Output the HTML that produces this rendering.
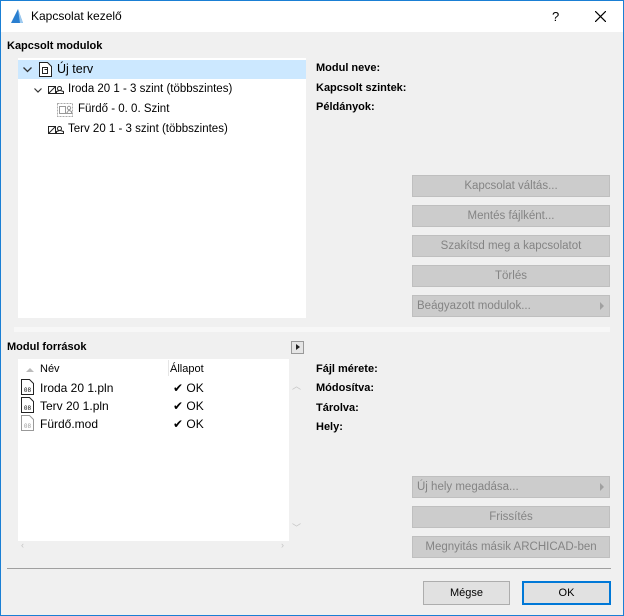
<!DOCTYPE html>
<html><head><meta charset="utf-8"><style>
*{box-sizing:border-box;margin:0;padding:0}
body{width:624px;height:616px;overflow:hidden;font-family:"Liberation Sans",sans-serif;font-size:11px;color:#000;background:#fff}
.win{position:absolute;left:0;top:0;width:624px;height:616px;border:1px solid #1a7fd4;background:#f0f0f0}
.title{position:absolute;left:0;top:0;width:622px;height:31px;background:#fff}
.title .t{position:absolute;left:30px;top:8px;font-size:12px}
.a{position:absolute;white-space:nowrap}
.b{font-weight:bold}
.box{position:absolute;background:#fff}
.btn{position:absolute;left:411px;width:198px;height:22px;background:#cccccc;border:1px solid #bfbfbf;color:#848484;text-align:center;line-height:20px;font-size:11.5px}
.btn.l{text-align:left;padding-left:4px}
.btn.l:after{content:"";position:absolute;right:5px;top:6px;border-left:4px solid #a0a0a0;border-top:4px solid transparent;border-bottom:4px solid transparent}
.pb{position:absolute;top:580px;height:24px;width:87px;background:#e1e1e1;border:1px solid #adadad;text-align:center;line-height:22px}
</style></head><body><div class="win">
<div class="title">
<svg style="position:absolute;left:9px;top:7px" width="14" height="16"><path d="M1 15 L8 1 L13 15 Z" fill="#2a7fd0"/><path d="M8 1 L13 15 L10 15 Z" fill="#9cc9ef"/></svg>
<div class="t">Kapcsolat kezelő</div>
<div class="a" style="left:551px;top:8px;font-size:13px">?</div>
<svg style="position:absolute;left:594px;top:10px" width="11" height="11"><path d="M0 0L11 11M11 0L0 11" stroke="#000" stroke-width="1.2"/></svg>
</div>
<div class="a b" style="left:6px;top:39px">Kapcsolt modulok</div>
<div class="box" style="left:17px;top:57px;width:288px;height:260px">
<div style="position:absolute;left:0;top:2px;width:288px;height:19px;background:#cce8ff"></div>
<svg style="position:absolute;left:5px;top:9px" width="9" height="6"><path d="M0.5 0.5L4.5 4.5L8.5 0.5" stroke="#333" fill="none" stroke-width="1.3"/></svg>
<svg style="position:absolute;left:21px;top:4px" width="13" height="15"><path d="M0.5 0.5H8.5L12.5 4.5V14.5H0.5Z" fill="#fff" stroke="#222"/><path d="M3.5 5.5h5v6h-5zM5.5 7.5h3" stroke="#222" fill="none"/></svg>
<div class="a" style="left:39px;top:4px;font-size:12.5px">Új terv</div>
<svg style="position:absolute;left:16px;top:30px" width="8" height="5"><path d="M0.5 0.5L4 4L7.5 0.5" stroke="#333" fill="none" stroke-width="1.2"/></svg>
<svg style="position:absolute;left:30px;top:27px" width="16" height="10"><rect x="0.5" y="1.5" width="7" height="7" fill="none" stroke="#222"/><path d="M1 8L7 2" stroke="#222"/><circle cx="11.5" cy="3.5" r="2" fill="none" stroke="#222"/><path d="M8.5 8.5h7v-2l-3-1h-1l-3 1z" fill="none" stroke="#222"/></svg>
<div class="a" style="left:50px;top:25px;font-size:11.5px">Iroda 20 1 - 3 szint (többszintes)</div>
<svg style="position:absolute;left:39px;top:45px" width="16" height="14"><rect x="0.5" y="0.5" width="15" height="13" fill="none" stroke="#aaa" stroke-dasharray="2 1"/><rect x="2.5" y="3.5" width="6" height="7" fill="none" stroke="#999"/><circle cx="12" cy="5" r="1.7" fill="none" stroke="#999"/><path d="M9.5 10.5h5v-2l-2-1h-1z" fill="none" stroke="#999"/></svg>
<div class="a" style="left:60px;top:45px;font-size:11.5px">Fürdő - 0. 0. Szint</div>
<svg style="position:absolute;left:30px;top:67px" width="16" height="10"><rect x="0.5" y="1.5" width="7" height="7" fill="none" stroke="#222"/><path d="M1 8L7 2" stroke="#222"/><circle cx="11.5" cy="3.5" r="2" fill="none" stroke="#222"/><path d="M8.5 8.5h7v-2l-3-1h-1l-3 1z" fill="none" stroke="#222"/></svg>
<div class="a" style="left:50px;top:65px;font-size:11.5px">Terv 20 1 - 3 szint (többszintes)</div>
</div>
<div class="a b" style="left:315px;top:61px">Modul neve:</div>
<div class="a b" style="left:315px;top:81px">Kapcsolt szintek:</div>
<div class="a b" style="left:315px;top:100px">Példányok:</div>
<div class="btn" style="top:174px">Kapcsolat váltás...</div>
<div class="btn" style="top:204px">Mentés fájlként...</div>
<div class="btn" style="top:234px">Szakítsd meg a kapcsolatot</div>
<div class="btn" style="top:264px">Törlés</div>
<div class="btn l" style="top:294px">Beágyazott modulok...</div>
<div style="position:absolute;left:13px;top:326px;width:596px;height:5px;background:#f7f7f7"></div>
<div class="a b" style="left:6px;top:340px">Modul források</div>
<div style="position:absolute;left:290px;top:340px;width:13px;height:13px;border:1px solid #999;background:#e5e5e5"><div style="position:absolute;left:4px;top:2px;border-left:4px solid #222;border-top:3.5px solid transparent;border-bottom:3.5px solid transparent"></div></div>
<div class="box" style="left:17px;top:358px;width:271px;height:182px">
<div style="position:absolute;left:150px;top:1px;width:1px;height:16px;background:#e5e5e5"></div>
<div style="position:absolute;left:8px;top:9px;border-bottom:4px solid #bbb;border-left:4px solid transparent;border-right:4px solid transparent"></div>
<div class="a" style="left:22px;top:4px">Név</div>
<div class="a" style="left:152px;top:4px">Állapot</div>
<div class="a" style="left:22px;top:22px;font-size:12px">Iroda 20 1.pln</div>
<div class="a" style="left:22px;top:40px;font-size:12px">Terv 20 1.pln</div>
<div class="a" style="left:22px;top:58px;font-size:12px">Fürdő.mod</div>
<svg style="position:absolute;left:3px;top:20px" width="13" height="56"><g fill="#fff" stroke="#222"><path d="M0.5 0.5H8.5L12.5 4.5V15.5H0.5Z"/><path d="M0.5 18.5H8.5L12.5 22.5V33.5H0.5Z"/></g><path d="M0.5 36.5H8.5L12.5 40.5V51.5H0.5Z" fill="#fff" stroke="#999"/><g font-size="6" font-family="Liberation Mono" text-anchor="middle"><text x="6.5" y="13">08</text><text x="6.5" y="31">08</text><text x="6.5" y="49" fill="#999">08</text></g></svg>
<div class="a" style="left:155px;top:22px;font-size:12px">✔ OK</div>
<div class="a" style="left:155px;top:40px;font-size:12px">✔ OK</div>
<div class="a" style="left:155px;top:58px;font-size:12px">✔ OK</div>
</div>
<div class="a" style="left:291px;top:378px;color:#c4c4c4;font-size:9px">︿</div>
<div class="a" style="left:291px;top:520px;color:#c4c4c4;font-size:9px">﹀</div>
<div class="a" style="left:20px;top:539px;color:#c4c4c4;font-size:9px">‹</div>
<div class="a" style="left:280px;top:539px;color:#c4c4c4;font-size:9px">›</div>
<div class="a b" style="left:315px;top:362px">Fájl mérete:</div>
<div class="a b" style="left:315px;top:381px">Módosítva:</div>
<div class="a b" style="left:315px;top:401px">Tárolva:</div>
<div class="a b" style="left:315px;top:420px">Hely:</div>
<div class="btn l" style="top:475px">Új hely megadása...</div>
<div class="btn" style="top:505px">Frissítés</div>
<div class="btn" style="top:535px">Megnyitás másik ARCHICAD-ben</div>
<div style="position:absolute;left:6px;top:567px;width:604px;height:1px;background:#a0a0a0"></div>
<div class="pb" style="left:422px">Mégse</div>
<div class="pb" style="left:521px;width:89px;border:2px solid #0078d7;line-height:20px">OK</div>
</div></body></html>
